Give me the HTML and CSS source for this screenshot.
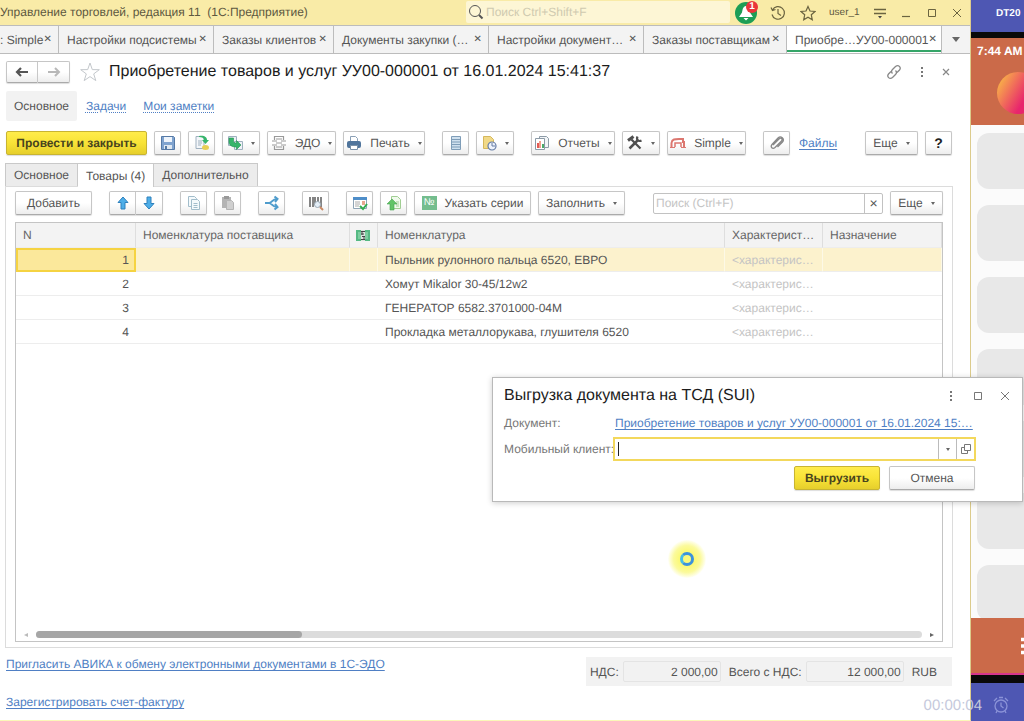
FILE: index.html
```html
<!DOCTYPE html>
<html lang="ru">
<head>
<meta charset="UTF-8">
<meta name="viewport" content="width=device-width, initial-scale=1.0">
<title>Управление торговлей, редакция 11</title>
<link rel="stylesheet" href="styles.css">
</head>
<body>
<main class="app">
  <header class="titlebar">
    <span class="app-name">Управление торговлей, редакция 11&nbsp; (1С:Предприятие)</span>
    <label class="global-search">
      <svg width="16" height="16" viewBox="0 0 16 16" fill="none" stroke="#555"><circle cx="7" cy="7" r="5.5"/><path d="M11 11l3.500 3.500" stroke-width="2"/></svg>
      <input type="text" placeholder="Поиск Ctrl+Shift+F" aria-label="Поиск">
    </label>
    <div class="title-tools">
      <button class="bell" aria-label="Уведомления">
        <svg width="22" height="22" viewBox="0 0 22 22"><circle cx="11" cy="11" r="11" fill="#1d9e55"/><path d="M11 4c-3 0-3.500 4-4 6.500l-3 4.500h14l-3-4.500C14.500 8 14 4 11 4zM8.500 16h5L11 18.500z" fill="#fff"/></svg>
        <span class="badge">1</span>
      </button>
      <button aria-label="История"><svg width="16" height="16" viewBox="0 0 16 16" fill="none" stroke="#6b6440" stroke-width="1.200"><path d="M2.500 5A6.300 6.300 0 1 1 2 9.500M1 2.500l1.500 3 3-1M8 4v4.500l3 2"/></svg></button>
      <button aria-label="Избранное"><svg width="16" height="16" viewBox="0 0 16 16" fill="none" stroke="#6b6440" stroke-width="1.200"><path d="M8 1.500l2 4.500 5 .5-3.700 3.300 1 5L8 12.200l-4.300 2.600 1-5L1 6.500 6 6z"/></svg></button>
      <span class="user">user_1</span>
      <button aria-label="Меню"><svg width="14" height="14" viewBox="0 0 14 14"><path d="M1 3.500h12M1 7.500h12" stroke="#6b6440" stroke-width="1.300"/><path d="M5 10h4l-2 2.500z" fill="#444"/></svg></button>
      <button aria-label="Свернуть"><svg width="12" height="12" viewBox="0 0 12 12"><path d="M2 9.500h8" stroke="#6b6440" stroke-width="1.200"/></svg></button>
      <button aria-label="Развернуть"><svg width="12" height="12" viewBox="0 0 12 12"><path d="M2.500 2.500h7v7h-7z" fill="none" stroke="#6b6440"/></svg></button>
      <button aria-label="Закрыть"><svg width="12" height="12" viewBox="0 0 12 12"><path d="M2 2l8 8M10 2l-8 8" stroke="#6b6440"/></svg></button>
    </div>
  </header>

  <nav class="tabs">
    <div class="tab tab-first"><a href="#">: Simple</a><button>✕</button></div>
    <div class="tab tab-wide"><a href="#">Настройки подсистемы</a><button>✕</button></div>
    <div class="tab tab-short"><a href="#">Заказы клиентов</a><button>✕</button></div>
    <div class="tab tab-wide"><a href="#">Документы закупки (…</a><button>✕</button></div>
    <div class="tab tab-wide"><a href="#">Настройки документ…</a><button>✕</button></div>
    <div class="tab tab-mid"><a href="#">Заказы поставщикам</a><button>✕</button></div>
    <div class="tab tab-wide active"><a href="#">Приобре…УУ00-000001</a><button>✕</button></div>
    <button class="tab-more" aria-label="Все вкладки"><span class="caret-big"></span></button>
  </nav>

  <div class="page-head">
    <div class="split">
      <button class="btn nav" aria-label="Назад"><svg width="14" height="12" viewBox="0 0 14 12"><path d="M2 6h11M6 2L2 6l4 4" fill="none" stroke="#555" stroke-width="2.200"/></svg></button>
      <button class="btn nav" aria-label="Вперед"><svg width="14" height="12" viewBox="0 0 14 12"><path d="M1 6h11M8 2l4 4-4 4" fill="none" stroke="#b8b8b8" stroke-width="2"/></svg></button>
    </div>
    <svg class="fav" width="22" height="22" viewBox="0 0 22 22"><path d="M11 2l2.300 6.600 7 .1-5.600 4.200 2.100 6.700L11 15.600l-5.800 4 2.100-6.700L1.700 8.700l7-.1z" fill="#fff" stroke="#c4c8cc"/></svg>
    <h1>Приобретение товаров и услуг УУ00-000001 от 16.01.2024 15:41:37</h1>
    <div class="head-tools">
      <button aria-label="Ссылка"><svg width="16" height="16" viewBox="0 0 16 16" fill="none" stroke="#888" stroke-width="1.300"><path d="M6.500 9.500C5 8 5.500 6.500 6.500 5.500L9.500 2.500c3-2.500 6 1 4 3.500L11 8.500M9.500 6.500C11 8 10.500 9.500 9.500 10.500L6.500 13.500c-3 2.500-6-1-4-3.500L5 7.500"/></svg></button>
      <button aria-label="Еще"><svg width="4" height="12" viewBox="0 0 4 12" fill="#777"><path d="M1 1h2v2H1zM1 5h2v2H1zM1 9h2v2H1z"/></svg></button>
      <button aria-label="Закрыть"><svg width="8" height="8" viewBox="0 0 8 8"><path d="M1 1l6 6M7 1L1 7" stroke="#888" stroke-width="1.200"/></svg></button>
    </div>
  </div>

  <nav class="sections">
    <a class="current" href="#">Основное</a>
    <a href="#">Задачи</a>
    <a href="#">Мои заметки</a>
  </nav>

  <div class="toolbar commands">
    <button class="btn primary post">Провести и закрыть</button>
    <button class="btn icon" aria-label="Записать"><svg width="16" height="16" viewBox="0 0 16 16"><path d="M1.500 1.500h12l1 1v12h-13z" fill="#7fa3cf" stroke="#5579a5"/><path d="M4 2h8v5H4z" fill="#eef4fb"/><path d="M4 10h8v4H4z" fill="#dfe8f1"/><path d="M5 11h2v3H5z" fill="#5579a5"/></svg></button>
    <button class="btn icon" aria-label="Провести"><svg width="16" height="16" viewBox="0 0 16 16"><path d="M2 1.500h8v12H2z" fill="#f4f7fa" stroke="#9fb0bf"/><path d="M4 6h4M4 8h4M4 10h3" stroke="#9fb0bf"/><path d="M5 1c5-1 8 1 8 4h2l-3.500 4L8 5h2c0-2-2-3-5-3z" fill="#36b56b"/><ellipse cx="11.500" cy="12.500" rx="3.500" ry="2.500" fill="#e8cf55"/></svg></button>
    <button class="btn drop" aria-label="Создать на основании"><svg width="16" height="16" viewBox="0 0 16 16"><path d="M1.500 1.500h8v9h-8z" fill="#eef2f6" stroke="#9fb0bf"/><path d="M7.500 6.500h8v8h-8z" fill="#eef2f6" stroke="#9fb0bf"/><path d="M2 3h4.500v3c0 1.500 1 2 3 2V5.500l4.500 4.500-4.500 4.500V12C4.500 12 2 10 2 7z" fill="#36b56b" stroke="#249153" stroke-width=".6"/></svg><i class="caret"></i></button>
    <button class="btn edo"><svg width="16" height="16" viewBox="0 0 16 16" fill="none" stroke="#999" stroke-width="1.200"><path d="M3.500 5V1.500h9V5M3.500 11v3.500h9V11M1 6h5M10 6h5M1 10h5M10 10h5M5 4h6M5 8h6M5 12h6"/></svg><span>ЭДО</span><i class="caret"></i></button>
    <button class="btn print"><svg width="16" height="16" viewBox="0 0 16 16"><path d="M4.500 1.500h5l2 2V7h-7z" fill="#fff" stroke="#8ba0b6"/><rect x="1" y="6" width="14" height="7" rx="2" fill="#50759c"/><path d="M4.500 10.500h7v4h-7z" fill="#fff" stroke="#7890a8"/></svg><span>Печать</span><i class="caret"></i></button>
    <button class="btn icon group" aria-label="Движения"><svg width="16" height="16" viewBox="0 0 16 16"><path d="M3.500 1.500h9v13h-9z" fill="#cfe0ee" stroke="#7f9db8"/><path d="M3 4.500h10M3 7h10M3 9.500h10M3 12h10" stroke="#7f9db8"/></svg></button>
    <button class="btn drop" aria-label="Напоминание"><svg width="16" height="16" viewBox="0 0 16 16"><path d="M2.500 1.500h7l3 3v9h-10z" fill="#f1d987" stroke="#d5b75c"/><circle cx="11" cy="11" r="4" fill="#eef3fc" stroke="#657ca5" stroke-width="1.200"/><path d="M11 8v3h3" fill="none" stroke="#657ca5"/></svg><i class="caret"></i></button>
    <button class="btn reports group"><svg width="16" height="16" viewBox="0 0 16 16"><path d="M5.500 1.500h7l2 2v9h-9z" fill="#f2f5f7" stroke="#8d9ba7"/><path d="M1.500 3.500h9v11h-9z" fill="#fff" stroke="#8d9ba7"/><path d="M3 8h2v5H3z" fill="#e35a54"/><path d="M5 6h2v7H5z" fill="#f0a08f"/><path d="M8 9h2v4H8z" fill="#4aa968"/></svg><span>Отчеты</span><i class="caret"></i></button>
    <button class="btn drop" aria-label="Настройки"><svg width="16" height="16" viewBox="0 0 16 16" fill="none" stroke="#505050"><path d="M2.500 13.500L11 5" stroke-width="2.500"/><path d="M10.500 1.500C9 4.500 11.500 7 14.500 5.500" stroke-width="2.200"/><path d="M4.500 4.500l9 9" stroke-width="2.200"/><path d="M1 5.500l5.500-4" stroke-width="3"/></svg><i class="caret"></i></button>
    <button class="btn simple"><svg width="16" height="16" viewBox="0 0 16 16" fill="none" stroke="#dc7770"><path d="M1.500 12V8C2 4 5 4 9 4h4v3h1v5" stroke-width="2"/><path d="M5 12V8h6v4" stroke-width="1.500"/><path d="M0 12.500h5M11 12.500h5"/></svg><span>Simple</span><i class="caret"></i></button>
    <button class="btn icon group" aria-label="Прикрепить"><svg width="16" height="16" viewBox="0 0 16 16" fill="none" stroke="#888" stroke-width="1.300"><path d="M4 10l6-6c2-2 4 0 2.500 2L6 12.500c-2.500 2-5-.5-3-3L9 3c3-3 7 1 4.500 4L8.500 12"/></svg></button>
    <a class="files" href="#">Файлы</a>
    <button class="btn more push"><span>Еще</span><i class="caret"></i></button>
    <button class="btn icon help">?</button>
  </div>

  <nav class="subtabs">
    <button>Основное</button>
    <button class="active">Товары (4)</button>
    <button>Дополнительно</button>
  </nav>

  <section class="panel">
    <div class="toolbar">
      <button class="btn add">Добавить</button>
      <div class="split group">
        <button class="btn icon" aria-label="Вверх"><svg width="14" height="14" viewBox="0 0 14 14"><path d="M7 1l5 5.500H9V13H5V6.500H2z" fill="#4eaee8" stroke="#2f81bd"/></svg></button>
        <button class="btn icon" aria-label="Вниз"><svg width="14" height="14" viewBox="0 0 14 14"><path d="M7 13L2 7.500h3V1h4v6.500h3z" fill="#4eaee8" stroke="#2f81bd"/></svg></button>
      </div>
      <button class="btn icon group" aria-label="Копировать"><svg width="16" height="16" viewBox="0 0 16 16" fill="#f5fafc" stroke="#a2bdcb"><path d="M2.500 1.500h6l2 2v8h-8z"/><path d="M5.500 4.500h6l2 2v8h-8zM7.500 8.500h4M7.500 10.500h4M7.500 12.500h4"/></svg></button>
      <button class="btn icon" aria-label="Вставить"><svg width="16" height="16" viewBox="0 0 16 16"><path d="M2 2h9v11H2z" fill="#b4b4b4"/><path d="M4 1h5v3H4z" fill="#999"/><path d="M6.500 5.500h5l2 2v7h-7z" fill="#cfcfcf" stroke="#b4b4b4"/></svg></button>
      <button class="btn icon group" aria-label="Разбить строку"><svg width="16" height="16" viewBox="0 0 16 16" fill="none" stroke="#4f9ccc" stroke-width="2"><path d="M1 8h4c3 0 3-4 8-4M5 8c3 0 3 4 8 4"/><path d="M10.500 1.500L13.500 4l-2.500 3M10.500 14.500l3-2.500-2.500-3"/></svg></button>
      <button class="btn icon group" aria-label="Штрихкод"><svg width="16" height="16" viewBox="0 0 16 16"><path d="M2 2v10M5 2v10M7 2v8M10 2v5M13 2v10" stroke="#666" stroke-width="1.600"/><circle cx="9.500" cy="9.500" r="3" fill="#e5eff8" stroke="#9ba9b4"/><path d="M12 12l3 3" stroke="#c88a65" stroke-width="2"/></svg></button>
      <button class="btn icon group" aria-label="Подбор"><svg width="16" height="16" viewBox="0 0 16 16"><path d="M1.500 2.500h13v11h-13z" fill="#fff" stroke="#8fa4b5"/><path d="M1 2h14v3H1z" fill="#4f8ec9"/><path d="M3 7h5M3 9h5M3 11h4" stroke="#aaa"/><path d="M10 7h3M10 9h3" stroke="#e38b6c" stroke-width="1.500"/><path d="M8 11l3 3 4-5" fill="none" stroke="#35ab51" stroke-width="2"/></svg></button>
      <button class="btn icon" aria-label="Загрузить"><svg width="16" height="16" viewBox="0 0 16 16"><path d="M5.500 1.500h6l3 3v9h-9z" fill="#f0faec" stroke="#a1ce93"/><path d="M10 7h3M10 9h3M10 11h3" stroke="#a1ce93"/><path d="M6 4l5 5H8v6H4V9H1z" fill="#62c467" stroke="#48a451" stroke-width=".6"/></svg></button>
      <button class="btn series"><span class="number-sign">№</span><span>Указать серии</span></button>
      <button class="btn fill"><span>Заполнить</span><i class="caret"></i></button>
      <div class="search">
        <input type="text" placeholder="Поиск (Ctrl+F)" aria-label="Поиск в таблице">
        <button aria-label="Очистить">×</button>
      </div>
      <button class="btn more"><span>Еще</span><i class="caret"></i></button>
    </div>

    <div class="grid">
      <table>
        <colgroup><col class="c-num"><col class="c-supplier"><col class="c-flag"><col><col class="c-char"><col class="c-purpose"></colgroup>
        <thead>
          <tr>
            <th>N</th>
            <th>Номенклатура поставщика</th>
            <th class="flag"><svg width="14" height="11" viewBox="0 0 14 11"><path d="M0 0h14v11H0z" fill="#55b983"/><path d="M2 2h10v7H2z" fill="#7dcea0"/><path d="M5 0h4v11H5z" fill="#d9e3dc"/><path d="M5 1.500h4M5 4h3M6 6.500h3M5 9.500h4M6 2v3M8 6v3" stroke="#444"/></svg></th>
            <th>Номенклатура</th>
            <th>Характерист…</th>
            <th>Назначение</th>
          </tr>
        </thead>
        <tbody>
          <tr class="selected"><td>1</td><td></td><td></td><td>Пыльник рулонного пальца 6520, ЕВРО</td><td>&lt;характерис…</td><td></td></tr>
          <tr><td>2</td><td></td><td></td><td>Хомут Mikalor 30-45/12w2</td><td>&lt;характерис…</td><td></td></tr>
          <tr><td>3</td><td></td><td></td><td>ГЕНЕРАТОР 6582.3701000-04М</td><td>&lt;характерис…</td><td></td></tr>
          <tr><td>4</td><td></td><td></td><td>Прокладка металлорукава, глушителя 6520</td><td>&lt;характерис…</td><td></td></tr>
        </tbody>
      </table>
      <div class="scrollbar">
        <span class="arrow-left"></span>
        <div class="track"><div class="thumb"></div></div>
        <span class="arrow-right"></span>
      </div>
    </div>
  </section>

  <footer class="footer">
    <div class="footer-row">
      <a href="#">Пригласить АВИКА к обмену электронными документами в 1С-ЭДО</a>
      <div class="totals">
        <label for="vat">НДС:</label>
        <input id="vat" type="text" value="2 000,00" readonly>
        <label for="total">Всего с НДС:</label>
        <input id="total" type="text" value="12 000,00" readonly>
        <span class="currency">RUB</span>
      </div>
    </div>
    <div class="footer-row"><a href="#">Зарегистрировать счет-фактуру</a></div>
  </footer>
</main>

<aside class="phone">
  <div class="phone-title">DT20</div>
  <div class="phone-head">
    <span>7:44 AM</span>
    <div class="avatar"></div>
  </div>
  <div class="tiles">
    <div class="tile"></div>
    <div class="tile"></div>
    <div class="tile"></div>
    <div class="tile"></div>
    <div class="tile"></div>
    <div class="tile"></div>
    <div class="tile"></div>
  </div>
  <div class="phone-nav"><svg width="16" height="18" viewBox="0 0 16 18"><path d="M0 2.500h16M0 9h16M0 15.500h16" stroke="#fff" stroke-width="3.500"/></svg></div>
  <div class="phone-bottom"></div>
</aside>

<div class="dialog" role="dialog" aria-labelledby="dialog-title">
  <div class="dialog-head">
    <h2 id="dialog-title">Выгрузка документа на ТСД (SUI)</h2>
    <button aria-label="Еще"><svg width="12" height="12" viewBox="0 0 12 12" fill="#777"><path d="M5 1h2v2H5zM5 5h2v2H5zM5 9h2v2H5z"/></svg></button>
    <button aria-label="Развернуть"><svg width="12" height="12" viewBox="0 0 12 12"><path d="M2.500 2.500h7v7h-7z" fill="none" stroke="#777"/></svg></button>
    <button aria-label="Закрыть"><svg width="12" height="12" viewBox="0 0 12 12"><path d="M2 2l8 8M10 2l-8 8" stroke="#777"/></svg></button>
  </div>
  <div class="dialog-row">
    <span class="label">Документ:</span>
    <a href="#">Приобретение товаров и услуг УУ00-000001 от 16.01.2024 15:…</a>
  </div>
  <div class="dialog-row">
    <label class="label" for="client">Мобильный клиент:</label>
    <div class="field">
      <span class="text-cursor"></span>
      <input id="client" type="text">
      <button aria-label="Выбрать"><i class="caret"></i></button>
      <button aria-label="Открыть"><svg width="10" height="10" viewBox="0 0 10 10"><path d="M3.500.5h6v6h-6zM3 3.500H.5v6h6V7" fill="none" stroke="#777"/></svg></button>
    </div>
  </div>
  <div class="dialog-buttons">
    <button class="btn primary">Выгрузить</button>
    <button class="btn">Отмена</button>
  </div>
</div>

<div class="pointer"><div class="ring"></div></div>
<div class="timer">
  <span>00:00:04</span>
  <svg width="18" height="18" viewBox="0 0 18 18" fill="none" stroke="#8b93d8" stroke-width="1.300"><circle cx="9" cy="10" r="6"/><path d="M9 6.500V10l2.500 2M2 5l3-3M16 5l-3-3M7 1.500h4M5 15l-1 2M13 15l1 2"/></svg>
</div>
</body>
</html>
```
FILE: styles.css
```css
* {
  box-sizing: border-box;
}
body {
  margin: 0;
  height: 100vh;
  display: flex;
  position: relative;
  overflow: hidden;
  background: #fff;
  color: #555;
  font-family: "Liberation Sans", Arial, sans-serif;
  font-size: 12px;
  text-rendering: geometricPrecision;
}
button, input {
  font: inherit;
  color: inherit;
  text-rendering: inherit;
  margin: 0;
  padding: 0;
  border: 0;
  background: none;
}
input {
  min-width: 0;
  outline: none;
}
svg {
  flex: none;
  display: block;
}
a {
  color: #4f7fc4;
  text-underline-offset: 2px;
}
::placeholder {
  color: #c4c4c4;
  opacity: 1;
}

/* Main window */
.app {
  flex: 1;
  min-width: 0;
  display: flex;
  flex-direction: column;
  border-right: 1px solid #dccb8c;
  border-bottom: 1px solid #fbf8b8;
}
.titlebar {
  display: flex;
  height: 25px;
  background: #f9eba7;
  color: #5d583f;
}
.app-name {
  flex: 1;
  white-space: nowrap;
  line-height: 25px;
}
.global-search {
  display: flex;
  align-items: center;
  gap: 2px;
  width: 264px;
  height: 22px;
  margin-top: 1px;
  padding-left: 2px;
  border-radius: 2px;
  background: #fdf6d5;
}
.global-search input {
  flex: 1;
}
.global-search ::placeholder {
  color: #cfcab0;
}
.title-tools {
  display: flex;
  align-items: center;
  justify-content: space-between;
  width: 240px;
  padding: 0 7px 0 5px;
}
.user {
  font-size: 10px;
}
.bell {
  position: relative;
}
.badge {
  position: absolute;
  top: -1px;
  right: -1px;
  width: 12px;
  height: 12px;
  border-radius: 50%;
  background: #e9363a;
  color: #fff;
  font-size: 10px;
  font-weight: bold;
  line-height: 12px;
  text-align: center;
}

/* Open windows */
.tabs {
  display: flex;
  height: 29px;
  background: #f3f3f3;
  border-top: 1px solid #bcbcbc;
  border-bottom: 1px solid #bcbcbc;
}
.tab {
  display: flex;
  align-items: center;
  justify-content: space-between;
  padding: 0 6px 0 8px;
  border-right: 1px solid #bcbcbc;
  white-space: nowrap;
}
.tab a {
  color: #555;
  text-decoration: none;
}
.tab button {
  font-family: "DejaVu Sans", sans-serif;
  font-size: 10px;
  font-weight: bold;
}
.tab-first {
  width: 59px;
  padding-left: 0;
}
.tab-short {
  width: 120px;
}
.tab-mid {
  width: 143px;
}
.tab-wide {
  width: 155px;
}
.tab.active {
  background: #fff;
  box-shadow: inset 0 -1px #fff, inset 0 -3px #35a568;
}
.tab-more {
  flex: 1;
  display: flex;
  align-items: center;
  justify-content: center;
}
.caret-big {
  border: 4px solid transparent;
  border-top: 5px solid #666;
  border-bottom: 0;
}

/* Buttons */
.btn {
  display: flex;
  align-items: center;
  justify-content: center;
  gap: 8px;
  height: 24px;
  border: 1px solid #c6c6c6;
  border-bottom-color: #aaa;
  border-radius: 2px;
  background: linear-gradient(#fff 50%, #ededed);
  box-shadow: 0 1px 1px #ddd;
  white-space: nowrap;
}
.btn.primary {
  border-color: #c8b432;
  background: linear-gradient(#ffec4b, #f8e337 50%, #e6cf2c);
  color: #48441e;
  font-weight: bold;
}
.icon {
  width: 27px;
}
.drop {
  width: 38px;
}
.caret {
  flex: none;
  border: 2px solid transparent;
  border-top: 3px solid #666;
  border-bottom: 0;
}
.split {
  display: flex;
}
.split .btn:first-child {
  border-radius: 2px 0 0 2px;
}
.split .btn:last-child {
  border-left: 0;
  border-radius: 0 2px 2px 0;
}
.toolbar {
  display: flex;
  align-items: center;
  gap: 7px;
}
.toolbar .group {
  margin-left: 10px;
}

/* Page heading */
.page-head {
  display: flex;
  align-items: center;
  height: 36px;
  padding: 0 20px 0 6px;
}
.nav {
  width: 32px;
  height: 22px;
}
.fav {
  margin: 0 8px 0 9px;
}
h1, h2 {
  margin: 0;
  color: #1c1c1c;
  font-size: 16px;
  font-weight: normal;
  white-space: nowrap;
}
.head-tools {
  display: flex;
  align-items: center;
  gap: 18px;
  margin-left: auto;
}
.sections {
  display: flex;
  gap: 17px;
  margin-top: 1px;
  padding-left: 6px;
  line-height: 30px;
}
.sections a {
  text-decoration-style: dotted;
}
.sections .current {
  margin-right: -8px;
  padding: 0 8px;
  border-radius: 2px;
  background: #f2f2f2;
  color: #555;
  text-decoration: none;
}
.commands {
  padding: 10px 18px 8px 6px;
}
.post {
  width: 141px;
}
.edo {
  width: 69px;
}
.print {
  width: 82px;
}
.reports {
  width: 84px;
}
.simple {
  width: 79px;
}
.more {
  width: 53px;
}
.files {
  margin-left: 2px;
}
.push {
  margin-left: auto;
}
.help {
  color: #222;
  font-size: 14px;
  font-weight: bold;
}

/* Document pages */
.subtabs {
  display: flex;
  height: 23px;
  margin-left: 5px;
}
.subtabs button {
  padding: 0 8px;
  border: 1px solid #c9c9c9;
  border-bottom: 0;
  border-left-width: 0;
  background: #ececec;
}
.subtabs button:first-child {
  border-left-width: 1px;
}
.subtabs .active {
  z-index: 1;
  margin-bottom: -1px;
  background: #fff;
}
.panel {
  flex: 1;
  display: flex;
  flex-direction: column;
  gap: 7px;
  margin: 0 17px 0 5px;
  padding: 4px 9px 5px;
  border: 1px solid #dcdcdc;
}
.add {
  width: 77px;
}
.series {
  width: 117px;
}
.fill {
  width: 87px;
}
.number-sign {
  width: 15px;
  background: #74bd8e;
  color: #fff;
  font-size: 10px;
  line-height: 14px;
}
.search {
  display: flex;
  width: 230px;
  height: 21px;
  margin-left: auto;
  border: 1px solid #c2c2c2;
  border-radius: 2px;
}
.search input {
  flex: 1;
  padding-left: 2px;
}
.search button {
  width: 18px;
  border-left: 1px solid #c2c2c2;
  font-size: 14px;
  line-height: 18px;
}
.grid {
  flex: 1;
  display: flex;
  flex-direction: column;
  justify-content: space-between;
  border: 1px solid #c4c4c4;
}
table {
  width: 100%;
  table-layout: fixed;
  border-collapse: separate;
  border-spacing: 0;
}
.c-num {
  width: 120px;
}
.c-supplier {
  width: 214px;
}
.c-flag {
  width: 28px;
}
.c-char {
  width: 98px;
}
.c-purpose {
  width: 119px;
}
th, td {
  height: 24px;
  padding: 0 7px;
  border-bottom: 1px solid #ededed;
  overflow: hidden;
  text-align: left;
  white-space: nowrap;
}
th {
  height: 25px;
  border-right: 1px solid #dedede;
  background: #f3f3f3;
  color: #666;
  font-weight: normal;
}
th.flag {
  padding: 0 6px;
}
td:first-child {
  text-align: right;
}
td:nth-child(5) {
  color: #c4c4c4;
}
.selected td {
  border-right: 1px solid #fdf9e6;
  background: #fcf2cd;
}
.selected td:first-child {
  padding-right: 5px;
  border: 2px solid #f5d342;
  background: #fbe89b;
}
.scrollbar {
  display: flex;
  align-items: center;
  gap: 8px;
  padding: 0 8px 3px;
}
.track {
  flex: 1;
  height: 7px;
  border-radius: 4px;
  background: #dcdcdc;
}
.thumb {
  width: 30%;
  height: 7px;
  border-radius: 4px;
  background: #a6a6a6;
}
.arrow-left, .arrow-right {
  border: 2px solid transparent;
}
.arrow-left {
  border-right: 4px solid #bbb;
  border-left: 0;
}
.arrow-right {
  border-left: 4px solid #666;
  border-right: 0;
}

/* Footer */
.footer {
  padding: 9px 18px 3px 6px;
}
.footer-row {
  display: flex;
  justify-content: space-between;
  min-height: 30px;
}
.footer-row:last-child {
  align-items: center;
}
.totals {
  display: flex;
  align-items: center;
  gap: 4px;
  height: 29px;
  padding: 0 15px 0 4px;
  background: #f2f2f2;
}
.totals input {
  width: 98px;
  height: 21px;
  margin-right: 4px;
  padding-right: 2px;
  border: 1px solid #e4e4e4;
  border-radius: 2px;
  text-align: right;
}

/* Mobile terminal */
.phone {
  flex: none;
  display: flex;
  flex-direction: column;
  width: 53px;
  overflow: hidden;
  background: #4e57b3;
  color: #fff;
}
.phone-title {
  height: 32px;
  padding-left: 25px;
  font-size: 10px;
  font-weight: bold;
  line-height: 28px;
}
.phone-head {
  height: 93px;
  padding: 6px 0 0 6px;
  border-top: 6px solid #090909;
  background: #cb6a49;
  font-weight: bold;
  white-space: nowrap;
}
.avatar {
  width: 42px;
  height: 42px;
  margin: 14px 0 0 20px;
  border-radius: 50%;
  background: linear-gradient(120deg, #f7a64b 15%, #e8256d 65%);
}
.tiles {
  flex: 1;
  min-height: 0;
  display: flex;
  flex-direction: column;
  gap: 16px;
  padding: 8px 0 0 6px;
  overflow: hidden;
  background: #fbfbfb;
}
.tile {
  flex: none;
  width: 90px;
  height: 56px;
  border-radius: 12px;
  background: #e8e8e8;
}
.phone-nav {
  height: 57px;
  padding: 19px 0 0 50px;
  border-bottom: 2px solid #d6358c;
  background: #cb6a49;
}
.phone-bottom {
  height: 46px;
  border-top: 8px solid #090909;
}

/* Export dialog */
.dialog {
  position: absolute;
  top: 377px;
  right: 1px;
  width: 531px;
  padding: 7px 11px 11px;
  border: 1px solid #b9b9b9;
  background: #fff;
  box-shadow: 0 1px 6px rgba(0, 0, 0, .2);
}
.dialog-head {
  display: flex;
  align-items: center;
  gap: 15px;
  height: 22px;
}
.dialog-head h2 {
  margin-right: auto;
}
.dialog-row {
  display: flex;
  align-items: center;
  height: 26px;
  padding-right: 35px;
}
.dialog-row:nth-child(2) {
  margin-top: 3px;
}
.label {
  flex: none;
  width: 109px;
  color: #777;
  white-space: nowrap;
}
.dialog-row a {
  margin-left: 2px;
  white-space: nowrap;
}
.field {
  flex: 1;
  display: flex;
  align-items: center;
  height: 24px;
  border: 2px solid #f3d85c;
}
.text-cursor {
  width: 1px;
  height: 14px;
  margin-left: 3px;
  background: #222;
}
.field input {
  flex: 1;
}
.field button {
  display: flex;
  align-items: center;
  justify-content: center;
  width: 18px;
  height: 20px;
  border-left: 1px solid #bbb;
}
.dialog-buttons {
  display: flex;
  justify-content: flex-end;
  gap: 9px;
  margin-top: 4px;
  padding-right: 36px;
}
.dialog-buttons .btn {
  width: 86px;
}

/* Screen recorder overlay */
.pointer {
  position: absolute;
  top: 540px;
  left: 668px;
  display: flex;
  align-items: center;
  justify-content: center;
  width: 38px;
  height: 38px;
  border-radius: 50%;
  background: radial-gradient(#fbf97a 30%, #fbfa9c 50%, rgba(255, 255, 200, .2) 70%);
}
.ring {
  width: 14px;
  height: 14px;
  border: 3px solid #3c92dc;
  border-left-color: #45bde8;
  border-radius: 50%;
}
.timer {
  position: absolute;
  right: 14px;
  bottom: 7px;
  display: flex;
  align-items: center;
  gap: 10px;
  color: #c5c9dc;
  font-size: 15px;
}
```
